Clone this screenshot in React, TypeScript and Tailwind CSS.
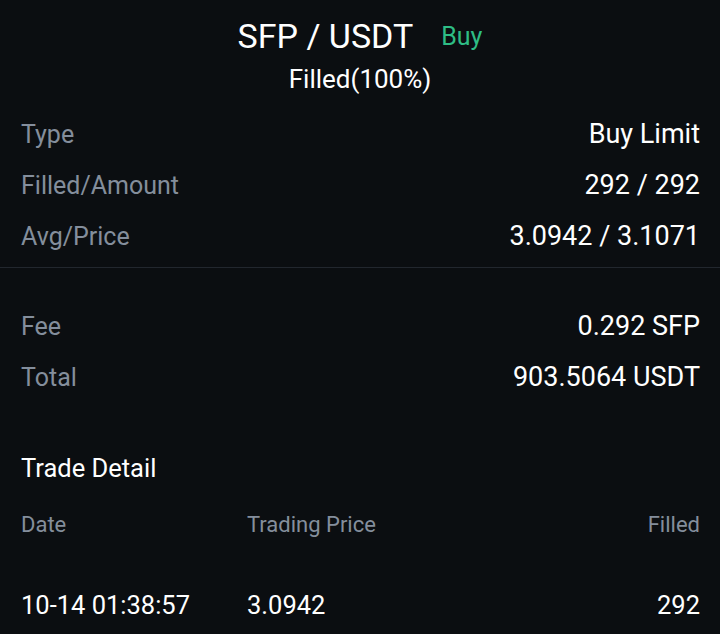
const labelCls = 'text-[#848e9c]'

function Row({ label, value }: { label: string; value: string }) {
  return (
    <div className="flex h-[51px] items-center justify-between">
      <span className={labelCls}>{label}</span>
      <span className="text-[27px] text-white">{value}</span>
    </div>
  )
}

export default function App() {
  return (
    <div
      className="min-h-[634px] w-[720px] bg-[#0b0e11] text-[25px] leading-none"
      style={{ fontFamily: 'Roboto, "Noto Sans", sans-serif' }}
    >
      {/* en-tête */}
      <div className="flex items-center justify-center pt-[14px]">
        <div className="flex h-[44px] items-center">
          <span className="text-[34px] text-white">SFP / USDT</span>
          <span className="ml-[28px] text-[25px] text-[#2ebd85]">Buy</span>
        </div>
      </div>
      <div className="mt-[6px] flex h-[30px] items-center justify-center text-[26px] text-white">
        Filled(100%)
      </div>

      <div className="mt-[15px] px-[21px] pr-[20px]">
        <Row label="Type" value="Buy Limit" />
        <Row label="Filled/Amount" value="292 / 292" />
        <Row label="Avg/Price" value="3.0942 / 3.1071" />
      </div>

      <div className="mt-[5px] h-px bg-[#22272e]" />

      <div className="mt-[33px] px-[21px] pr-[20px]">
        <Row label="Fee" value="0.292 SFP" />
        <Row label="Total" value="903.5064 USDT" />
      </div>

      {/* détail des transactions */}
      <div className="mt-[41px] flex h-[50px] items-center px-[21px] text-[25.5px] text-white">
        Trade Detail
      </div>
      <div className="mt-[6px] flex h-[50px] items-center px-[21px] pr-[20px] text-[22px]">
        <span className={`w-[226px] ${labelCls}`}>Date</span>
        <span className={`flex-1 ${labelCls}`}>Trading Price</span>
        <span className={labelCls}>Filled</span>
      </div>
      <div className="mt-[31px] flex h-[50px] items-center px-[21px] pr-[20px] text-[25.5px] text-white">
        <span className="w-[226px]">10-14 01:38:57</span>
        <span className="flex-1">3.0942</span>
        <span>292</span>
      </div>
    </div>
  )
}
